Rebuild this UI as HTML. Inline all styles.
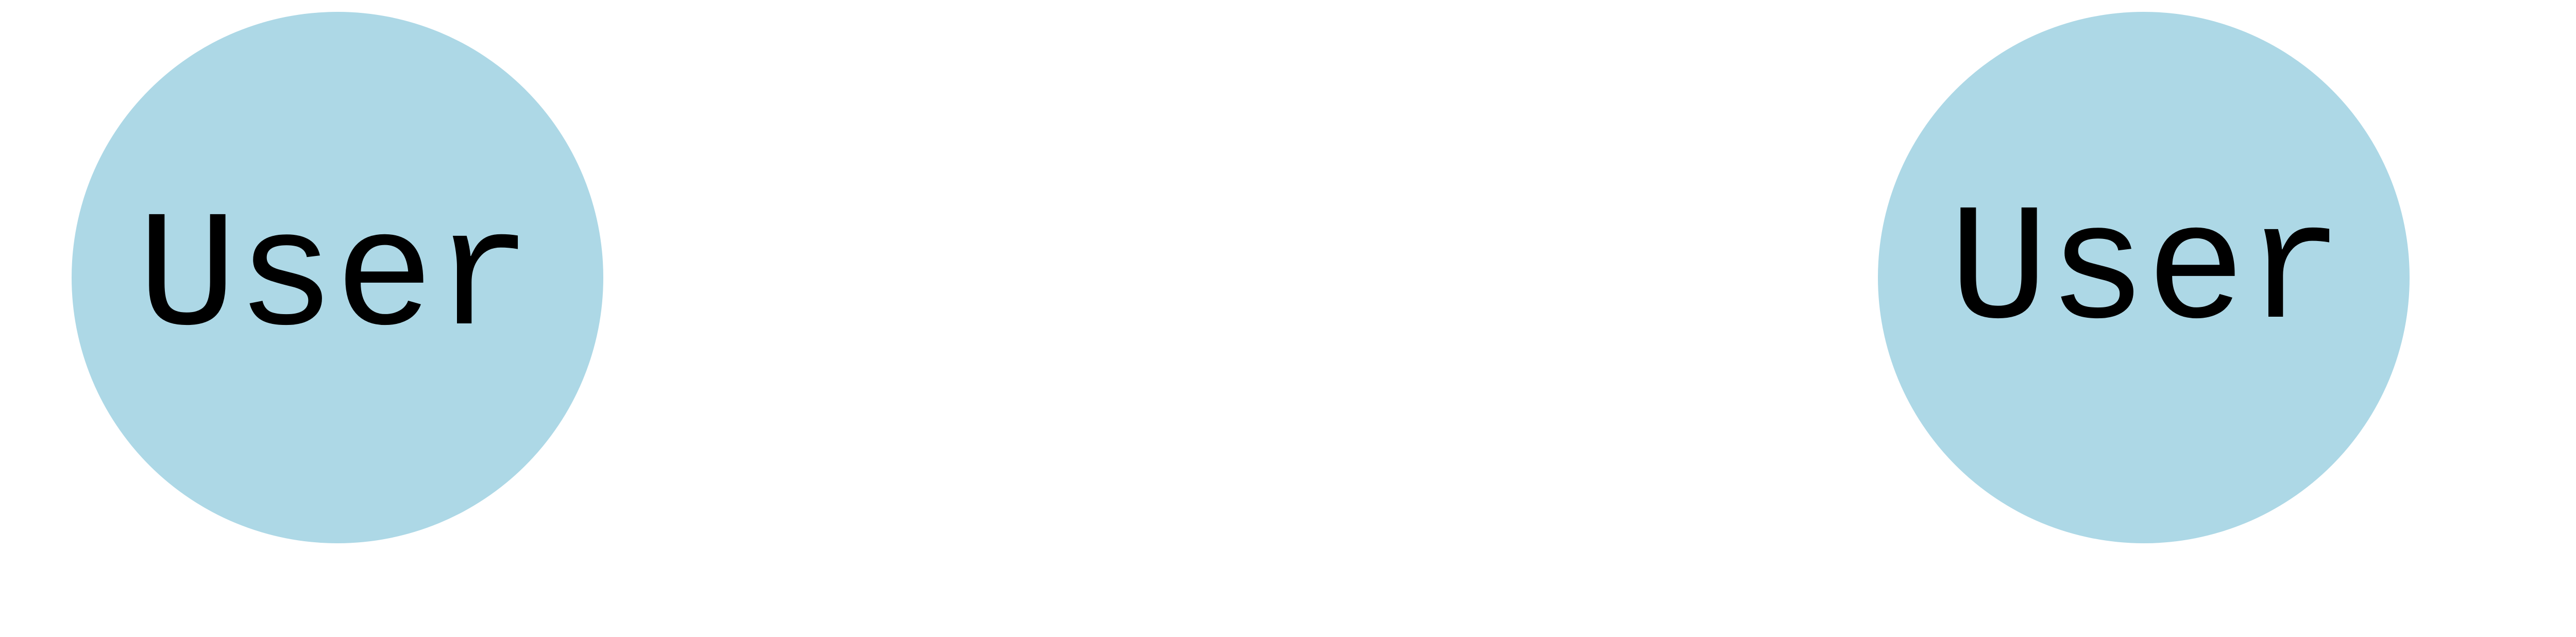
<!DOCTYPE html>
<html><head><meta charset="utf-8"><style>
html,body{margin:0;padding:0;background:#fff;}
svg{display:block;}
</style></head><body>
<svg width="5060" height="1237" xmlns="http://www.w3.org/2000/svg">
<rect width="5060" height="1237" fill="#fff"/>
<circle cx="655" cy="539" r="516" fill="#ADD8E6"/>
<circle cx="4161" cy="539" r="516" fill="#ADD8E6"/>
<text x="267" y="628" textLength="767" lengthAdjust="spacing" font-size="322" fill="#000" style="font-family:'Liberation Mono','Noto Sans Mono CJK JP','DejaVu Sans Mono','Liberation Serif',monospace">User</text>
<text x="3783" y="615" textLength="767" lengthAdjust="spacing" font-size="322" fill="#000" style="font-family:'Liberation Mono','Noto Sans Mono CJK JP','DejaVu Sans Mono','Liberation Serif',monospace">User</text>
</svg>
</body></html>
